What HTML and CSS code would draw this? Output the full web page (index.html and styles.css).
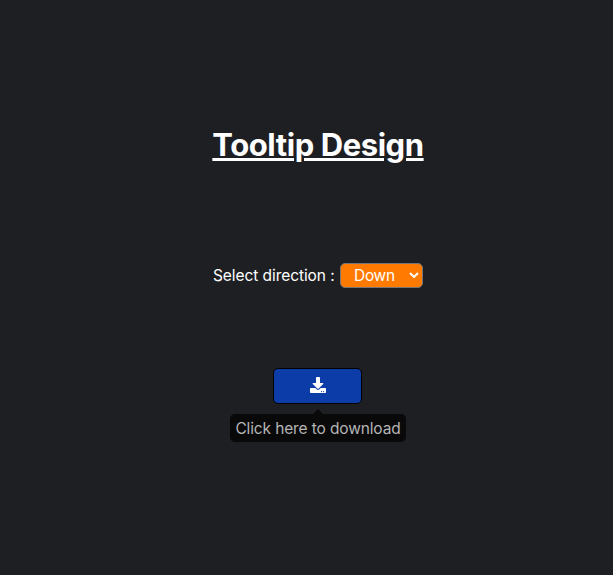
FILE: index.html
```html
<!DOCTYPE html>
<html lang="en">
<head>
<meta charset="utf-8">
<title>Tooltip Design</title>
<link rel="stylesheet" href="styles.css">
</head>
<body>
<main class="page">
  <h1 class="title">Tooltip Design</h1>
  <div class="direction">
    <label class="direction-label" for="direction">Select direction :</label>
    <div class="select-wrap">
      <select class="select" id="direction"><option>Down</option><option>Up</option><option>Left</option><option>Right</option></select>
      <svg class="chevron" viewBox="0 0 10 6"><path d="M1 1l4 4 4-4" fill="none" stroke="#fff" stroke-width="2"/></svg>
    </div>
  </div>
  <div class="download">
    <button class="button" aria-label="Download">
      <svg class="icon" viewBox="0 0 512 512"><path fill="#fff" d="M216 0h80c13.300 0 24 10.700 24 24v168h87.700c17.800 0 26.700 21.500 14.100 34.100L269.700 378.300c-7.500 7.500-19.800 7.500-27.300 0L90.100 226.100c-12.600-12.600-3.700-34.100 14.100-34.100H192V24c0-13.300 10.700-24 24-24zm296 376v112c0 13.300-10.700 24-24 24H24c-13.300 0-24-10.700-24-24V376c0-13.300 10.700-24 24-24h146.700l49 49c20.100 20.100 52.500 20.100 72.600 0l49-49H488c13.300 0 24 10.700 24 24zm-124 88c0-11-9-20-20-20s-20 9-20 20 9 20 20 20 20-9 20-20zm64 0c0-11-9-20-20-20s-20 9-20 20 9 20 20 20 20-9 20-20z"/></svg>
    </button>
    <div class="tooltip">Click here to download</div>
  </div>
</main>
</body>
</html>
```

FILE: styles.css
```css
body {
  margin: 0;
  background: #1e1f23;
  color: #fff;
  font: 15.5px/20px Inter, sans-serif;
}
.page {
  display: flex;
  flex-direction: column;
  align-items: center;
  padding: 125px 0 0 23px;
}
.title {
  margin: 0;
  font-size: 31px;
  line-height: 39px;
  font-weight: 700;
  letter-spacing: -0.43px;
  text-decoration: underline;
  text-decoration-thickness: 3px;
}
.direction {
  display: flex;
  align-items: flex-start;
  width: 210px;
  justify-content: space-between;
  margin-top: 99px;
}
.direction-label {
  padding-top: 3px;
  letter-spacing: -0.07px;
  white-space: nowrap;
}
.select-wrap {
  position: relative;
  width: 83px;
  height: 25px;
}
.select {
  appearance: none;
  box-sizing: border-box;
  width: 83px;
  height: 25px;
  padding: 1px 13px 0;
  border: 1px solid #767676;
  border-radius: 5px;
  background: #ff7a00;
  color: #fff;
  font: inherit;
  letter-spacing: -0.3px;
  display: block;
}
.chevron {
  position: absolute;
  right: 4px;
  top: 9px;
  width: 10px;
  height: 6px;
}
.download {
  display: flex;
  flex-direction: column;
  align-items: center;
  margin-top: 80px;
}
.button {
  display: flex;
  align-items: center;
  justify-content: center;
  box-sizing: border-box;
  width: 89px;
  height: 36px;
  margin-right: 1px;
  padding: 0 0 2px 1px;
  border: 1px solid #000;
  border-radius: 5px;
  background: #0b3ca8;
}
.icon {
  width: 16px;
  height: 16px;
}
.tooltip {
  position: relative;
  box-sizing: border-box;
  width: 176px;
  height: 28px;
  margin-top: 10px;
  padding: 5px 0 3px;
  border-radius: 5px;
  background: #09090a;
  color: #b5b5b6;
  text-align: center;
  white-space: nowrap;
  letter-spacing: -0.13px;
}
.tooltip::before {
  content: "";
  position: absolute;
  bottom: 100%;
  left: 50%;
  margin-left: -5px;
  border: 5px solid transparent;
  border-top: 0;
  border-bottom-color: #09090a;
}
```
